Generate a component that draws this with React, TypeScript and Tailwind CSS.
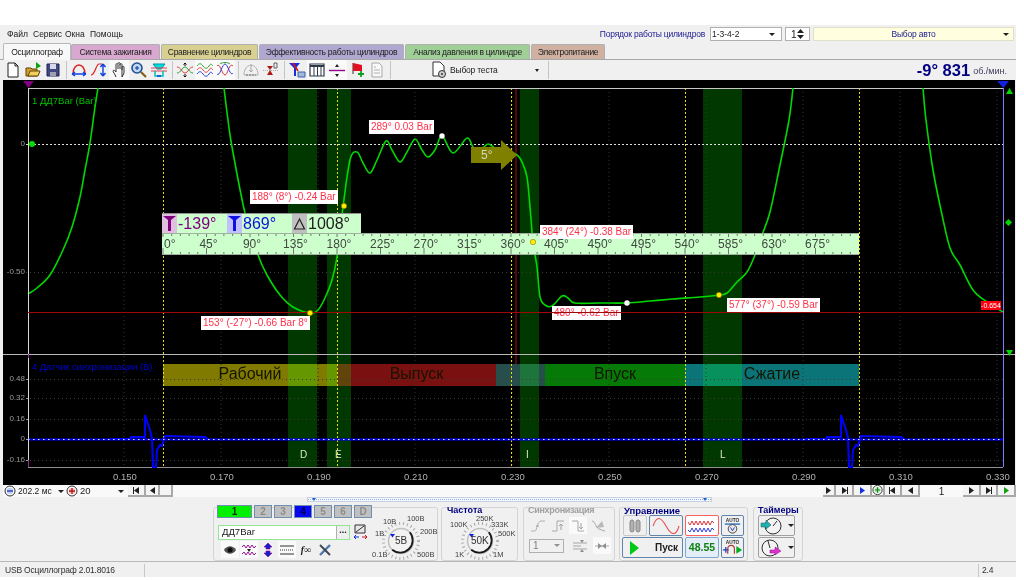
import React from "react";

type P = [number, number];
const smooth = (pts: P[]) => {
  let d = `M${pts[0][0]} ${pts[0][1]}`;
  for (let i = 0; i < pts.length - 1; i++) {
    const p0 = pts[Math.max(i - 1, 0)];
    const p1 = pts[i];
    const p2 = pts[i + 1];
    const p3 = pts[Math.min(i + 2, pts.length - 1)];
    const c1x = p1[0] + (p2[0] - p0[0]) / 6;
    const c1y = p1[1] + (p2[1] - p0[1]) / 6;
    const c2x = p2[0] - (p3[0] - p1[0]) / 6;
    const c2y = p2[1] - (p3[1] - p1[1]) / 6;
    d += `C${c1x} ${c1y} ${c2x} ${c2y} ${p2[0]} ${p2[1]}`;
  }
  return d;
};

const leftCurve: P[] = [[28, 294], [37, 288], [50, 275], [63, 250], [72, 227], [80, 197], [85, 170], [90, 143], [95, 107], [98, 88]];
const midCurve: P[] = [[224, 88], [228, 120], [232, 147], [245, 213], [258, 255], [267, 275], [280, 295], [293, 307], [310, 313], [318, 310], [325, 298], [332, 280], [337, 257], [343, 207], [350, 160], [357, 152], [363, 163], [370, 173], [377, 160], [386, 141], [392, 150], [400, 162], [407, 152], [415, 139], [422, 150], [428, 157], [435, 150], [442, 136], [453, 153], [467, 138], [473, 147], [480, 150], [488, 144], [495, 148], [505, 150], [517, 155], [522, 162], [527, 177], [530, 207], [533, 242], [537, 267], [540, 297], [545, 305], [552, 306], [562, 296], [568, 298], [575, 303], [600, 303], [627, 303], [650, 301], [673, 299], [700, 297], [719, 295], [727, 293], [737, 282], [747, 272], [755, 255], [762, 235], [770, 212], [780, 165], [789, 120], [793, 88]];
const rightCurve: P[] = [[923, 88], [926, 120], [933, 170], [941, 210], [950, 248], [960, 265], [973, 290], [987, 302], [1003, 312]];

const bands = [[288, 29], [327, 24], [520, 19], [703, 39]];
const marks = [163, 337, 511, 685, 859];
const gridX = [124, 221, 318, 415, 512, 609, 706, 803, 900, 997];
const xLabels = ["0.150", "0.170", "0.190", "0.210", "0.230", "0.250", "0.270", "0.290", "0.310", "0.330"];
const rulerLabels = [45, 90, 135, 180, 225, 270, 315, 360, 405, 450, 495, 540, 585, 630, 675];
const pulse = (o: number) => `M${o + 110} 439L${o + 130} 439L${o + 131} 437L${o + 145} 437L${o + 145} 415L${o + 150} 430L${o + 152} 438L${o + 153} 467L${o + 156} 467L${o + 157} 450L${o + 160} 445L${o + 162} 446L${o + 165} 436L${o + 205} 437L${o + 208} 439`;

const DataLabel = ({ className, children }: { className: string; children: React.ReactNode }) => (
  <div className={`absolute bg-white text-[#ff3048] text-[10px] leading-[14px] px-[2px] whitespace-nowrap ${className}`}>{children}</div>
);
const YLabel = ({ className, children }: { className: string; children: React.ReactNode }) => (
  <div className={`absolute w-[22px] text-right text-[#9a9a9a] text-[8px] leading-[10px] ${className}`}>{children}</div>
);
const Seg = ({ className, children }: { className: string; children: React.ReactNode }) => (
  <div className={`absolute top-[283px] h-[22px] text-center text-[16px] leading-[22px] text-[#141400] ${className}`}>{children}</div>
);

const Chart = () => (
  <div className="relative w-[1012px] h-[405px] ml-[3px] bg-black overflow-hidden">
    <svg className="absolute inset-0" width="1012" height="405" viewBox="3 80 1012 405" fill="none">
      <rect x="163" y="364" width="174" height="22" fill="#807a00" />
      <rect x="337" y="364" width="159" height="22" fill="#7b1010" />
      <rect x="496" y="364" width="49" height="22" fill="#264f4c" />
      <rect x="545" y="364" width="140" height="22" fill="#067a06" />
      <rect x="685" y="364" width="174" height="22" fill="#0a7478" />
      {bands.map(([x, w]) => (
        <rect key={x} x={x} y="88" width={w} height="379" fill="#00ff00" fillOpacity="0.22" />
      ))}
      {gridX.map((x) => (
        <path key={x} d={`M${x} 88V467`} stroke="#34342c" strokeDasharray="1 3" />
      ))}
      {[272, 379, 398, 419, 460].map((y) => (
        <path key={y} d={`M26 ${y + 0.5}H1003`} stroke="#3c3c32" strokeDasharray="1 3" />
      ))}
      {marks.map((x) => (
        <path key={x} d={`M${x + 0.5} 88V467`} stroke="#f0dc00" strokeDasharray="2 2" />
      ))}
      <path d="M516 88V354M516 354V364" stroke="#a01010" />
      <path d="M3 354.5H1015" stroke="#b8b8b8" />
      <path d="M28 88.5H1003" stroke="#c8c8c8" />
      <path d="M28 467.5H1003" stroke="#909090" />
      <path d="M26 144.5H1003" stroke="#e0e0e0" strokeDasharray="2 2" />
      <path d={smooth(leftCurve)} stroke="#00d800" strokeWidth="1.6" />
      <path d={smooth(midCurve)} stroke="#00d800" strokeWidth="1.6" />
      <path d={smooth(rightCurve)} stroke="#00d800" strokeWidth="1.6" />
      <path d="M28 439.5H1003" stroke="#0000ff" strokeWidth="2" />
      <path d={pulse(0)} stroke="#0000ff" strokeWidth="2" />
      <path d={pulse(696)} stroke="#0000ff" strokeWidth="2" />
      <path d="M28 439.5H1003" stroke="#e8e8e8" strokeDasharray="1.5 3.5" />
      <path d="M28.5 88V354" stroke="#d8d8d8" />
      <path d="M28.5 354V358M28.5 460V467" stroke="#a020a0" />
      <path d="M28.5 358V460" stroke="#d8d8d8" />
      <path d="M1003.5 88V467" stroke="#8080ff" />
      <path d="M23 81H34L28.5 88Z" fill="#800080" />
      <path d="M997 81H1009L1003.5 88Z" fill="#1020e0" />
      <path d="M1006 94L1009.5 88L1013 94Z" fill="#00d800" />
      <path d="M1006 350L1009.5 356L1013 350Z" fill="#00d800" />
      <path d="M1008.5 219L1012 222.5L1008.5 226L1005 222.5Z" fill="#00d800" />
      <circle cx="32" cy="144" r="3" fill="#00e000" />
      {[379, 398, 419, 439, 460].map((y) => (
        <path key={y} d={`M26 ${y + 0.5}H28`} stroke="#a0a0a0" />
      ))}
    </svg>

    <div className="absolute left-[29px] top-[15px] text-[9.5px] leading-[12px] text-[#00c000] whitespace-nowrap">1 ДД7Bar (Bar)</div>
    <div className="absolute left-[29px] top-[281px] text-[9.5px] tracking-[-0.1px] leading-[12px] text-[#0000d0] whitespace-nowrap">4 Датчик синхронизации (В)</div>
    <YLabel className="left-0 top-[59px]">0</YLabel>
    <YLabel className="left-0 top-[187px]">-0.50</YLabel>
    <YLabel className="left-0 top-[294px]">0.48</YLabel>
    <YLabel className="left-0 top-[313px]">0.32</YLabel>
    <YLabel className="left-0 top-[334px]">0.16</YLabel>
    <YLabel className="left-0 top-[354px]">0</YLabel>
    <YLabel className="left-0 top-[375px]">-0.16</YLabel>

    <Seg className="left-[160px] w-[174px]">Рабочий</Seg>
    <Seg className="left-[334px] w-[159px]">Выпуск</Seg>
    <Seg className="left-[542px] w-[140px]">Впуск</Seg>
    <Seg className="left-[682px] w-[174px]">Сжатие</Seg>

    {[["D", 300], ["E", 335], ["I", 526], ["L", 720]].map(([t, x]) => (
      <div key={t as string} className="absolute top-[369px] text-[10px] leading-[12px] text-[#d8e8c8]" style={{ left: x as number - 3 }}>{t}</div>
    ))}
    {xLabels.map((t, i) => (
      <div key={t} className="absolute top-[391px] w-[40px] text-center text-[9.5px] leading-[12px] text-[#b0b0b0]" style={{ left: gridX[i] - 22 }}>{t}</div>
    ))}

    <div className="absolute left-[159px] top-[133px] w-[199px] h-[20px] bg-[#ccffcc] flex items-center border-t border-[#909090] text-[16px]">
      <span className="w-[15px] h-[19px] bg-[#e0c0e0] flex items-center justify-center">
        <svg width="13" height="15" viewBox="0 0 13 15"><path d="M0 0H13L8 4V15H5V4Z" fill="#800080" /></svg>
      </span>
      <span className="w-[50px] text-[#800080] pl-[1px]">-139°</span>
      <span className="w-[15px] h-[19px] bg-[#c0c0ff] flex items-center justify-center">
        <svg width="13" height="15" viewBox="0 0 13 15"><path d="M0 0H13L8 4V15H5V4Z" fill="#1010e0" /></svg>
      </span>
      <span className="w-[50px] text-[#1010e0] pl-[1px]">869°</span>
      <span className="w-[15px] h-[19px] bg-[#c0c0c0] flex items-center justify-center">
        <svg width="13" height="13" viewBox="0 0 13 13"><path d="M1.5 12H11.5L6.5 2Z" stroke="#202020" strokeWidth="1.2" fill="none" /></svg>
      </span>
      <span className="text-[#202020] pl-[1px]">1008°</span>
    </div>
    <div className="absolute left-[159px] top-[153px] w-[697px] h-[22px] bg-[#ccffcc] border-y border-[#a0b0a0]">
      <svg className="absolute inset-0" width="697" height="20" fill="none">
        {Array.from({ length: 80 }).map((_, i) => (
          <path key={i} d={`M${1 + i * 8.7} 0V${i % 5 === 0 ? 3 : 2}M${1 + i * 8.7} 20V${i % 5 === 0 ? 14 : 18}`} stroke="#707870" />
        ))}
      </svg>
      <span className="absolute left-[2px] top-[3px] text-[12px] leading-[14px] text-[#404840]">0°</span>
      {rulerLabels.map((d) => (
        <span key={d} className="absolute top-[3px] w-[40px] text-center text-[12px] leading-[14px] text-[#404840]" style={{ left: d * 0.9667 - 17 }}>{d}°</span>
      ))}
    </div>

    <div className="absolute left-[468px] top-[60px] w-[46px] h-[30px] flex items-center">
      <svg className="absolute inset-0" width="46" height="30" viewBox="0 0 46 30"><path d="M0 7H30V0L46 15L30 30V23H0Z" fill="#808000" /></svg>
      <span className="relative ml-[10px] text-[12px] leading-[14px] text-[#d8d8c0]">5°</span>
    </div>

    <DataLabel className="left-[366px] top-[40px]">289° 0.03 Bar</DataLabel>
    <DataLabel className="left-[247px] top-[110px]">188° (8°) -0.24 Bar</DataLabel>
    <DataLabel className="left-[198px] top-[236px]">153° (-27°) -0.66 Bar 8°</DataLabel>
    <DataLabel className="left-[537px] top-[145px]">384° (24°) -0.38 Bar</DataLabel>
    <DataLabel className="left-[549px] top-[226px]">480° -0.62 Bar</DataLabel>
    <DataLabel className="left-[724px] top-[218px]">577° (37°) -0.59 Bar</DataLabel>
    <div className="absolute left-[978px] top-[221px] w-[20px] h-[9px] bg-[#ff0010] text-white text-[7px] leading-[9px] text-center">-0.654</div>

    <svg className="absolute inset-0 pointer-events-none" width="1012" height="405" viewBox="3 80 1012 405" fill="none">
      <path d="M28 312.5H1003" stroke="#a00808" />
      <circle cx="344" cy="206" r="2.7" fill="#ffee00" stroke="#806000" strokeWidth=".5" />
      <circle cx="310" cy="313" r="2.7" fill="#ffee00" stroke="#806000" strokeWidth=".5" />
      <circle cx="533" cy="242" r="2.7" fill="#ffee00" stroke="#806000" strokeWidth=".5" />
      <circle cx="719" cy="295" r="2.7" fill="#ffee00" stroke="#806000" strokeWidth=".5" />
      <circle cx="442" cy="136" r="2.7" fill="#ffffff" />
      <circle cx="627" cy="303" r="2.7" fill="#ffffff" />
    </svg>
  </div>
);

const I = ({ children, w = 18, h = 18 }: { children: React.ReactNode; w?: number; h?: number }) => (
  <svg width={w} height={h} viewBox={`0 0 ${w} ${h}`} fill="none">{children}</svg>
);
const Tb = ({ on, children }: { on?: boolean; children: React.ReactNode }) => (
  <div className={`w-5 h-full flex items-center justify-center ${on ? "bg-[#fafafa]" : ""}`}>{children}</div>
);
const Sep = () => (
  <div className="w-[6px] h-full flex justify-center py-[1px]"><div className="w-px h-full bg-[#c4c4c4]" /></div>
);

const Toolbar = () => (
  <div className="h-[21px] flex items-stretch pl-[3px] border-t border-[#a8a8a8] text-[10px]">
    <Tb><I><path d="M4 2H11L14 5V16H4Z" fill="#fff" stroke="#202020" /><path d="M11 2V5H14" stroke="#202020" /></I></Tb>
    <Tb><I><path d="M2 7H7L8 8H13V15H2Z" fill="#d0a030" stroke="#604000" /><path d="M4 15L6 10H16L14 15Z" fill="#f0d060" stroke="#604000" /><path d="M12 1L17 5L12 8Z" fill="#10a010" /></I></Tb>
    <Tb><I><path d="M3 3H15V15H3Z" fill="#404880" stroke="#202050" /><path d="M6 3H12V8H6Z" fill="#d8d8e8" /><path d="M6 11H12V15H6Z" fill="#a0a0b0" /></I></Tb>
    <Sep />
    <Tb><I><path d="M3 13C3 1 15 1 15 13" stroke="#e02020" strokeWidth="1.4" /><path d="M2 13H16M2 13L5 11M2 13L5 15M16 13L13 11M16 13L13 15" stroke="#1040e0" strokeWidth="1.3" /></I></Tb>
    <Tb><I><path d="M1 14C5 14 6 3 9 3H12" stroke="#e02020" strokeWidth="1.2" /><path d="M13 3V15M13 3L10.500 6M13 3L15.500 6M13 15L10.500 12M13 15L15.500 12" stroke="#1040e0" strokeWidth="1.4" /></I></Tb>
    <Tb on><I><path d="M6 16C5 13 3 11 3 10S5 9 6 11V4C6 2 8 2 8 4V8M8 3C8 1 10 1 10 3V8M10 4C10 2 12 2 12 4V9M12 6C12 5 14 5 14 6V12L12 16Z" fill="#fff" stroke="#303030" /></I></Tb>
    <Tb><I><circle cx="7" cy="7" r="5" fill="#c0d8f0" stroke="#205090" strokeWidth="1.6" /><path d="M5 7H9M7 5V9" stroke="#1030a0" /><path d="M11 11L16 16" stroke="#806020" strokeWidth="2.2" /></I></Tb>
    <Tb><I><path d="M3 3H15L11 8H7Z" fill="#00e0e0" stroke="#0090a0" /><path d="M1 7H17M1 10H17" stroke="#e04050" /><path d="M5 10V15H13V10" stroke="#00c0c0" strokeWidth="1.5" /><path d="M7 15H11" stroke="#1040e0" strokeWidth="1.5" /></I></Tb>
    <Sep />
    <Tb><I><path d="M1 6C5 6 6 12 9 12S13 6 17 6" stroke="#e04040" /><path d="M1 12C5 12 6 6 9 6S13 12 17 12" stroke="#30a030" /><path d="M9 2V5M9 13V16M7.500 3.500L9 2L10.500 3.500M7.500 14.500L9 16L10.500 14.500" stroke="#101010" /></I></Tb>
    <Tb on><I><path d="M1 5C3 2 5 2 7 5S11 8 13 5S15 3 17 5" stroke="#30a030" /><path d="M1 9C3 6 5 6 7 9S11 12 13 9S15 7 17 9" stroke="#e04040" /><path d="M1 13C3 10 5 10 7 13S11 16 13 13S15 11 17 13" stroke="#2040e0" /></I></Tb>
    <Tb on><I><path d="M1 5C4 1 6 14 9 14S13 1 17 5" stroke="#e03030" /><path d="M1 13C4 16 6 3 9 3S14 16 17 12" stroke="#2040e0" /><path d="M4 3C6 1 12 1 14 3" stroke="#30a030" /></I></Tb>
    <Sep />
    <Tb><I><path d="M2 14C2 1 16 1 16 14Z" stroke="#b0b0b0" /><path d="M9 3V11M7 9L9 11L11 9" stroke="#a8a8a8" /><path d="M4 14H14" stroke="#a0a0a0" strokeWidth="2" strokeDasharray="2 1" /></I></Tb>
    <Tb><I><path d="M1 9.500H17" stroke="#b0b0b0" strokeDasharray="1 1" /><path d="M5 5H11L8 9L11 14H5L8 9Z" fill="#b01818" /><path d="M12 2H15V7H12Z" stroke="#505050" strokeWidth=".9" /></I></Tb>
    <Sep />
    <Tb><I><path d="M1 2H12L8 7V15H6V7Z" fill="#1030e0" /><path d="M5 2L10 10" stroke="#e01010" strokeWidth="1.6" /><path d="M10 11H17V16H10Z" fill="#a0b8e0" stroke="#4060a0" /></I></Tb>
    <Tb on><I><path d="M2 3H16V15H2Z" fill="#fff" stroke="#303848" strokeWidth="1.2" /><path d="M2 5H16" stroke="#303848" strokeWidth="2" /><path d="M6 5V15M9.500 5V15M13 5V15" stroke="#303848" /></I></Tb>
    <Tb on><I><path d="M1 9.500H17" stroke="#900090" strokeWidth="1.4" /><path d="M7 6H11L9 3ZM7 13H11L9 16Z" fill="#202020" /></I></Tb>
    <Tb><I><path d="M5 2V13" stroke="#303030" /><path d="M5 2L14 4V10H5Z" fill="#e01020" /><path d="M10 13H16M13 10V16" stroke="#10a020" strokeWidth="1.8" /></I></Tb>
    <Tb><I><path d="M4 2H11L14 5V16H4Z" fill="#f8f8f8" stroke="#a8a8a8" /><path d="M6 6H8M6 9H12M6 12H12" stroke="#b0b0b0" /></I></Tb>
    <Sep />
    <div className="w-[152px] flex items-center pl-[37px] gap-[2px] relative text-[#202020]">
      <I w={18} h={18}><path d="M3 1H10L14 5V15H3Z" fill="#fff" stroke="#303030" /><circle cx="12" cy="13" r="3.500" fill="#d0d0d0" stroke="#303030" /><circle cx="12" cy="13" r="1" fill="#303030" /></I>
      <span className="text-[8.5px] tracking-[-0.2px] whitespace-nowrap">Выбор теста</span>
      <span className="absolute left-[142px] top-[9px] w-0 h-0 border-x-[2.500px] border-x-transparent border-t-[3px] border-t-[#202020]" />
    </div>
    <Sep />
    <div className="flex-1 flex items-center justify-end pr-[9px] gap-[3px]">
      <span className="text-[16.5px] font-bold text-[#000080] whitespace-nowrap">-9° 831</span>
      <span className="text-[9px] text-[#404060] mt-[4px]">об./мин.</span>
    </div>
  </div>
);

const tabs = [
  ["Система зажигания", "w-[89px] bg-[#d8a8d0]"],
  ["Сравнение цилиндров", "w-[97px] bg-[#d8d090] ml-[1px]"],
  ["Эффективность работы цилиндров", "w-[145px] bg-[#b0a8d0] ml-[1px]"],
  ["Анализ давления в цилиндре", "w-[125px] bg-[#a0d098] ml-[1px]"],
  ["Электропитание", "w-[74px] bg-[#d0b0a0] ml-[1px]"],
];

const Caret = ({ className = "" }: { className?: string }) => (
  <span className={`w-0 h-0 border-x-[3px] border-x-transparent border-t-[3px] border-t-[#202020] ${className}`} />
);

const Btn = ({ className, children }: { className: string; children: React.ReactNode }) => (
  <div className={`h-[12px] flex items-center justify-center border-r-2 border-b-2 border-[#a8a8a8] bg-[#f4f4f4] ${className}`}>{children}</div>
);
const Tri = ({ c = "#202020", bar, left }: { c?: string; bar?: "l" | "r"; left?: boolean }) => (
  <svg width="11" height="9" viewBox="0 0 11 9">
    <path d={left ? "M8 1V8L3 4.500Z" : "M3 1V8L8 4.500Z"} fill={c} />
    {bar === "r" && <path d="M8.500 1V8" stroke={c} />}
    {bar === "l" && <path d="M2.500 1V8" stroke={c} />}
  </svg>
);
const Round = ({ sign }: { sign: "-" | "+" | "g" }) => (
  <svg width="12" height="12" viewBox="0 0 12 12" fill="none">
    <circle cx="6" cy="6" r="5" stroke="#303030" fill="#fff" />
    <circle cx="6" cy="6" r="3.200" fill={sign === "-" ? "#c0d0f0" : sign === "+" ? "#f0c0c0" : "#c0f0c0"} />
    <path d={sign === "-" ? "M3 6H9" : "M3 6H9M6 3V9"} stroke={sign === "-" ? "#1030c0" : sign === "+" ? "#c01010" : "#108010"} strokeWidth="1.3" />
  </svg>
);

const ControlRow = () => (
  <div className="h-[12px] ml-[3px] flex items-center bg-[#f9f9f9] text-[8.5px] text-[#202020]">
    <div className="w-[14px] flex justify-center"><Round sign="-" /></div>
    <span className="w-[38px] pl-px whitespace-nowrap">202.2 мс</span>
    <Caret className="ml-[3px]" />
    <div className="w-[14px] ml-[1px] flex justify-center"><Round sign="+" /></div>
    <span className="w-[39px] pl-px text-[9.5px]">20</span>
    <Caret />
    <div className="w-[3px]" />
    <Btn className="w-[18px] ml-[1px]"><Tri bar="l" left /></Btn>
    <Btn className="w-[14px]"><Tri left /></Btn>
    <Btn className="w-[13px]"><span /></Btn>
    <div className="flex-1" />
    <Btn className="w-[13px]"><Tri /></Btn>
    <Btn className="w-[18px]"><Tri bar="r" /></Btn>
    <Btn className="w-[18px]"><Tri c="#1030e0" /></Btn>
    <Btn className="w-[13px]"><Round sign="g" /></Btn>
    <Btn className="w-[17px]"><Tri bar="l" left /></Btn>
    <Btn className="w-[18px]"><Tri left /></Btn>
    <span className="w-[43px] text-center text-[10px]">1</span>
    <Btn className="w-[18px]"><Tri /></Btn>
    <Btn className="w-[17px]"><Tri bar="r" /></Btn>
    <Btn className="w-[18px]"><Tri c="#10a010" /></Btn>
  </div>
);

const KnobArt = () => (
  <>
    <circle r="17.500" stroke="#a8a8a8" strokeWidth="3" strokeDasharray="1 3" />
    <circle r="12.500" fill="#f2f2f2" stroke="#c0c0c0" strokeWidth="1.500" />
    <path d="M-8.800 8.800A12.500 12.500 0 0 0 8.800 -8.800" stroke="#181818" strokeWidth="1.800" />
    <path d="M-11 -7H-6L-8.500 -3.500Z" fill="#1020e0" />
  </>
);

const tiny = "absolute text-[7.5px] leading-[10px] text-[#404040] whitespace-nowrap";
const Panel = ({ className, title, tc, children }: { className: string; title?: string; tc?: string; children?: React.ReactNode }) => (
  <div className={`relative h-[54px] border border-[#d4d4d4] rounded-[3px] ${className}`}>
    {title && <div className={`absolute left-[4px] -top-[3px] leading-[11px] font-bold whitespace-nowrap ${tc}`}>{title}</div>}
    {children}
  </div>
);

const Ch = ({ t, className }: { t: string; className: string }) => (
  <div className={`h-[13px] flex items-center justify-center border border-[#6f8faf] text-[10px] leading-[10px] font-bold ${className}`}>{t}</div>
);

const Ui = ({ on, children }: { on?: boolean; children: React.ReactNode }) => (
  <div className={`w-[18px] h-[17px] flex items-center justify-center ${on ? "bg-[#fafafa]" : ""}`}>{children}</div>
);
const CBtn = ({ className, children }: { className: string; children: React.ReactNode }) => (
  <div className={`h-[21px] flex items-center justify-center rounded-[2px] border border-[#5f86aa] ${className}`}>{children}</div>
);
const AutoText = () => <text x="11" y="5.500" textAnchor="middle" fontSize="5" fontWeight="700" fill="#303030">AUTO</text>;

const Panels = () => (
  <div className="h-[60px] pl-[213px] pt-[5px] flex border-b border-[#b8b8b8]">
    <Panel className="w-[225px] flex">
      <div className="w-[158px] -mt-[3px] flex flex-col">
        <div className="flex gap-[2px] ml-[3px]">
          <Ch t="1" className="w-[35px] bg-[#00f000] text-[#003000]" />
          <Ch t="2" className="w-[18px] bg-[#c0c0c0] text-[#8c8c8c]" />
          <Ch t="3" className="w-[18px] bg-[#c0c0c0] text-[#8c8c8c]" />
          <Ch t="4" className="w-[18px] bg-[#0808f0] text-[#000050]" />
          <Ch t="5" className="w-[18px] bg-[#c0c0c0] text-[#8c8c8c]" />
          <Ch t="6" className="w-[18px] bg-[#c0c0c0] text-[#8c8c8c]" />
          <Ch t="D" className="w-[18px] bg-[#c0c0c0] text-[#8c8c8c]" />
        </div>
        <div className="flex items-center mt-[6px] ml-[4px]">
          <div className="w-[132px] h-[15px] bg-white border border-[#90e890] flex items-center justify-between">
            <span className="pl-[3px] text-[9.5px] text-[#202020]">ДД7Bar</span>
            <span className="w-[13px] h-[13px] bg-[#eeeeee] border-l border-[#b0b0b0] text-[9px] leading-[9px] text-center font-bold text-[#202020]">...</span>
          </div>
          <div className="ml-[3px]"><I w={15} h={16}><path d="M2 1H12V9H2Z" fill="#e8e8e8" stroke="#303030" /><path d="M3 8L11 2" stroke="#303030" /><path d="M1 13H6M1 13L3 11M1 13L3 15" stroke="#1030d0" /><path d="M9 13H14M14 13L12 11M14 13L12 15" stroke="#d01020" /></I></div>
        </div>
        <div className="flex mt-px ml-[7px] gap-px">
          <Ui on><I w={14} h={12}><path d="M1 6C4 1 10 1 13 6C10 11 4 11 1 6Z" fill="#505050" /><circle cx="7" cy="6" r="2.500" fill="#101010" /></I></Ui>
          <Ui on><I w={16} h={14}><path d="M1 4L3 2L5 5L7 2L9 5L11 2L13 5L15 3" stroke="#a010a0" /><path d="M1 11L3 9L5 12L7 9L9 12L11 9L13 12L15 10" stroke="#a010a0" /><path d="M6 6H10L8 9Z" fill="#202020" /></I></Ui>
          <Ui><I w={12} h={16}><path d="M6 1L10 5H8V7H4V5H2ZM6 15L10 11H8V9H4V11H2Z" fill="#1020d0" stroke="#900090" strokeWidth=".6" /></I></Ui>
          <Ui on><I w={16} h={12}><path d="M1 2H15M1 10H15" stroke="#303030" /><path d="M1 6H15" stroke="#303030" strokeDasharray="1 1" /></I></Ui>
          <Ui><span className="text-[10px] italic font-bold text-[#202020] font-['Liberation_Serif',serif]">f∞</span></Ui>
          <Ui><I w={16} h={16}><path d="M3 13L13 3" stroke="#5078a8" strokeWidth="2.400" /><path d="M3 3L13 13" stroke="#404850" strokeWidth="2" /></I></Ui>
        </div>
      </div>
      <div className="relative w-[66px] h-[52px]">
        <svg className="absolute left-[6px] top-[10px]" width="46" height="46" viewBox="-23 -23 46 46" fill="none"><KnobArt /></svg>
        <span className="absolute left-[23px] top-[27px] text-[10px] leading-[12px] text-[#303030]">5B</span>
        <span className={`${tiny} left-0 top-[42px]`}>0.1B</span>
        <span className={`${tiny} left-[3px] top-[21px]`}>1B</span>
        <span className={`${tiny} left-[11px] top-[9px]`}>10B</span>
        <span className={`${tiny} left-[35px] top-[6px]`}>100B</span>
        <span className={`${tiny} left-[48px] top-[19px]`}>200B</span>
        <span className={`${tiny} left-[45px] top-[42px]`}>500B</span>
      </div>
    </Panel>
    <Panel className="w-[77px] ml-[3px]" title="Частота" tc="text-[#000080] left-[5px] text-[9px]">
      <div className="relative w-full h-full">
        <svg className="absolute left-[15px] top-[10px]" width="46" height="46" viewBox="-23 -23 46 46" fill="none"><KnobArt /></svg>
        <span className="absolute left-[29px] top-[27px] text-[10px] leading-[12px] text-[#303030]">50K</span>
        <span className={`${tiny} left-[8px] top-[12px]`}>100K</span>
        <span className={`${tiny} left-[34px] top-[6px]`}>250K</span>
        <span className={`${tiny} left-[49px] top-[12px]`}>333K</span>
        <span className={`${tiny} left-[56px] top-[21px]`}>500K</span>
        <span className={`${tiny} left-[13px] top-[42px]`}>1K</span>
        <span className={`${tiny} left-[51px] top-[42px]`}>1M</span>
      </div>
    </Panel>
    <Panel className="w-[92px] ml-[5px] flex flex-col pl-[5px]" title="Синхронизация" tc="text-[#a0a0a0] text-[9px] tracking-[-0.3px]">
      <div className="flex gap-[2px] mt-[9px]">
        <Ui><I w={16} h={16}><path d="M1 13H5C7 13 7 3 11 3H15" stroke="#b0b0b0" /><path d="M6 8L9 8" stroke="#a0a0a0" /></I></Ui>
        <Ui><I w={16} h={16}><path d="M2 13H7V3H14" stroke="#a8a8a8" /><path d="M11 6V12M9 8L11 6L13 8" stroke="#a0a0a0" /></I></Ui>
        <Ui on><I w={16} h={16}><path d="M2 3H8V13H14" stroke="#a8a8a8" /><path d="M11 5V11M9 9L11 11L13 9" stroke="#a0a0a0" /></I></Ui>
        <Ui><I w={16} h={16}><path d="M2 3C5 3 6 10 9 11S14 13 15 13" stroke="#a8a8a8" /><path d="M6 10L12 3L14 9Z" fill="#b8b8b8" /></I></Ui>
      </div>
      <div className="flex items-center mt-[3px]">
        <div className="w-[35px] h-[14px] border border-[#b0b0b0] flex items-center justify-between px-[3px] text-[10px] text-[#808080]">1<span className="w-0 h-0 border-x-[3px] border-x-transparent border-t-[3px] border-t-[#909090]" /></div>
        <div className="ml-[7px]"><Ui><I w={16} h={14}><path d="M1 4H15M1 7H9M1 10H15" stroke="#a8a8a8" /><path d="M8 1H12L10 4ZM8 13H12L10 10Z" fill="#909090" /></I></Ui></div>
        <div className="ml-[4px]"><Ui on><I w={16} h={10}><path d="M1 5H15" stroke="#a8a8a8" /><path d="M4 2L8 5L4 8ZM12 2L8 5L12 8Z" fill="#909090" /></I></Ui></div>
      </div>
    </Panel>
    <Panel className="w-[129px] ml-[4px] flex flex-col gap-px pt-[7px] pl-[2px]" title="Управление" tc="text-[#000080] text-[9.5px]">
      <div className="flex gap-[2px] ml-px">
        <CBtn className="w-[24px] border-[#c8c8c8]"><I w={14} h={16}><rect x="2" y="2" width="4" height="12" rx="2" fill="#b0b0b0" stroke="#888" /><rect x="8" y="2" width="4" height="12" rx="2" fill="#b0b0b0" stroke="#888" /></I></CBtn>
        <CBtn className="w-[34px]"><I w={30} h={18}><path d="M2 9C6 -2 10 0 15 9S25 20 28 9" stroke="#e85050" strokeWidth="1.100" /></I></CBtn>
        <CBtn className="w-[34px] bg-white border-[#ff6060]"><I w={30} h={18}><path d="M1 5L3 8L5 4L7 8L9 4L11 8L13 4L15 8L17 4L19 8L21 4L23 8L25 4L27 6" stroke="#e02020" strokeWidth=".9" /><path d="M1 13L3 15L5 11L7 15L9 11L11 15L13 11L15 15L17 11L19 15L21 11L23 15L25 11L27 13" stroke="#2030e0" strokeWidth=".9" /></I></CBtn>
        <CBtn className="w-[23px]"><I w={22} h={19}><AutoText /><path d="M3 8H19" stroke="#3070c0" strokeWidth="1.500" /><circle cx="11" cy="13" r="4.500" fill="#e8e8e8" stroke="#404040" /><path d="M9 11.500L11 15L13 11.500" stroke="#2040c0" /></I></CBtn>
      </div>
      <div className="flex gap-[2px]">
        <CBtn className="w-[61px] justify-start pl-[7px] gap-[16px]"><I w={9} h={14}><path d="M0 0V14L9 7Z" fill="#00c818" /></I><span className="text-[10px] font-bold text-[#202020]">Пуск</span></CBtn>
        <CBtn className="w-[34px] bg-[#e4eef8] border-[#80a8d0]"><span className="text-[10.5px] font-bold text-[#108010]">48.55</span></CBtn>
        <CBtn className="w-[23px]"><I w={22} h={19}><AutoText /><path d="M1 12H7M4 9V15" stroke="#1040d0" strokeWidth="1.300" /><path d="M6 16V11C6 6 13 6 13 11V16" stroke="#b03838" strokeWidth="1.200" /><path d="M15 8V16L21 12Z" fill="#00b020" /></I></CBtn>
      </div>
    </Panel>
    <Panel className="w-[50px] ml-[5px] flex flex-col gap-px pt-[7px] pl-[4px]" title="Таймеры" tc="text-[#000080] text-[9px]">
      <CBtn className="w-[37px] justify-start pl-px border-[#a0a0a0]">
        <I w={24} h={19}><circle cx="13" cy="10" r="8" fill="#f4f4f4" stroke="#303030" /><path d="M13 10L17 5" stroke="#303030" /><path d="M1 7H6V4L11 9L6 13V11H1Z" fill="#20b0b0" stroke="#106060" strokeWidth=".5" /></I>
        <Caret className="ml-[4px]" />
      </CBtn>
      <CBtn className="w-[37px] justify-start pl-px border-[#a0a0a0]">
        <I w={24} h={19}><circle cx="10" cy="10" r="8" fill="#f4f4f4" stroke="#303030" /><path d="M10 10L8 3" stroke="#303030" /><path d="M10 12H15V9L21 13L15 17V15H10Z" fill="#e030d0" stroke="#801080" strokeWidth=".5" /></I>
        <Caret className="ml-[4px]" />
      </CBtn>
    </Panel>
  </div>
);

export default function App() {
  return (
    <div className="w-[1024px] h-[580px] bg-white overflow-hidden pt-[25px] blur-[0.3px] font-['Liberation_Sans',Arial,sans-serif]">
      <div className="w-[1016px] h-[552px] bg-[#f0f0f0] flex flex-col">
        <div className="h-[18px] flex items-center pl-[7px] pr-[2px] text-[8.5px] text-[#202020]">
          <span className="w-[26px]">Файл</span>
          <span className="w-[32px]">Сервис</span>
          <span className="w-[25px]">Окна</span>
          <span>Помощь</span>
          <span className="ml-auto text-[#1a1a90] tracking-[-0.2px] mr-[5px] whitespace-nowrap">Порядок работы цилиндров</span>
          <div className="w-[72px] h-[14px] bg-white border border-[#b0b0b0] flex items-center justify-between pl-px pr-[6px]">1-3-4-2<Caret /></div>
          <div className="w-[25px] h-[14px] ml-[3px] bg-white border border-[#b0b0b0] flex items-center justify-between px-[5px] text-[10px]">
            1
            <svg width="7" height="10" viewBox="0 0 7 10"><path d="M0 4L3.500 0L7 4ZM0 6L3.500 10L7 6Z" fill="#202020" /></svg>
          </div>
          <div className="relative w-[201px] h-[14px] ml-[3px] bg-[#ffffe0] border border-[#e0e0c8] flex items-center justify-center tracking-[-0.2px] text-[#1a1a90]">
            Выбор авто
            <Caret className="absolute right-[4px] top-[5px]" />
          </div>
        </div>
        <div className="h-[16px] flex items-end pl-[3px] text-[8.5px] tracking-[-0.3px] text-[#202020]">
          <div className="w-[68px] h-[17px] bg-[#f8f8f8] border border-b-0 border-[#b8b8b8] rounded-t-[2px] flex items-center justify-center -mb-px relative">Осциллограф</div>
          {tabs.map(([t, c]) => (
            <div key={t} className={`h-[15px] border border-b-0 border-[#b0b0b0] rounded-t-[2px] flex items-center justify-center whitespace-nowrap ${c}`}>{t}</div>
          ))}
        </div>
        <Toolbar />
        <Chart />
        <ControlRow />
        <div className="h-[5px] pl-[307px]">
          <div className="relative w-[405px] h-[5px] bg-[#f6f9ff] border border-[#c8d0e0] flex items-center">
            <div className="w-full h-px border-t border-dotted border-[#90b0e0]" />
            <span className="absolute left-[4px] top-0 w-0 h-0 border-x-[2px] border-x-transparent border-t-[3px] border-t-[#2060e0]" />
            <span className="absolute right-[4px] top-0 w-0 h-0 border-x-[2px] border-x-transparent border-t-[3px] border-t-[#2060e0]" />
          </div>
        </div>
        <Panels />
        <div className="h-[15px] flex items-stretch text-[8.5px] tracking-[-0.2px] text-[#303030] pt-[2px]">
          <div className="w-[145px] pl-[5px] flex items-center border-r border-[#c8c8c8] whitespace-nowrap">USB Осциллограф 2.01.8016</div>
          <div className="flex-1 border-r border-[#c8c8c8]" />
          <div className="w-[37px] pl-[3px] flex items-center">2.4</div>
        </div>
      </div>
    </div>
  );
}
